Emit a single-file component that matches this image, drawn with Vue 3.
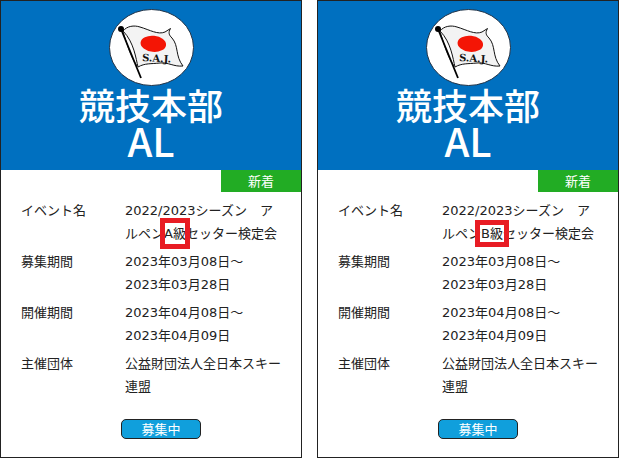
<template>
  <main class="event-list">
    <article v-for="event in events" :key="event.grade" class="event-card">
      <header class="event-banner">
        <svg class="event-logo" viewBox="0 0 85 77" role="img" aria-label="S.A.J.">
          <ellipse cx="42.5" cy="38.5" rx="42" ry="38" fill="#fff" stroke="#243447" stroke-width="1" />
          <path
            d="M14 22 C18 17 25 16 31 18 C41 21 49 26 56 23 L61.5 19.5 C59 24 60 26 63 29 C70 37 66 47 74 57 C65 58 59 53 51 54 C42 55 36 54 29 58 C27 50 25 33 14 22 Z"
            fill="#f3f3f3"
            stroke="#111"
            stroke-width="1"
          />
          <path d="M14 23 C18 34 20 45 28 57" fill="none" stroke="#333" stroke-width="1" />
          <path d="M12 20 L32 69" stroke="#000" stroke-width="1.8" />
          <circle cx="12" cy="20" r="3" fill="#000" />
          <ellipse cx="44.3" cy="34.8" rx="12.8" ry="8" fill="#f41505" transform="rotate(6 44.3 34.8)" />
          <text class="logo-text" x="33" y="52" transform="rotate(3 33 52)">S.A.J.</text>
        </svg>
        <h2 class="event-heading">
          <span class="heading-name">競技本部</span>
          <span class="heading-code">AL</span>
        </h2>
      </header>

      <span class="event-tag">新着</span>

      <dl class="event-info">
        <div class="info-row">
          <dt>イベント名</dt>
          <dd>
            2022/2023シーズン　アルペン<span :class="['grade', event.markClass]">{{ event.grade }}</span>セッター検定会
          </dd>
        </div>
        <div v-for="period in periods" :key="period.label" class="info-row">
          <dt>{{ period.label }}</dt>
          <dd>{{ period.from }}～<br>{{ period.to }}</dd>
        </div>
        <div class="info-row">
          <dt>主催団体</dt>
          <dd>公益財団法人全日本スキー連盟</dd>
        </div>
      </dl>

      <button type="button" class="status-button">募集中</button>
    </article>
  </main>
</template>

<script setup>
const events = [
  { grade: 'A級', markClass: 'grade-tall' },
  { grade: 'B級', markClass: 'grade-wide' }
]

const periods = [
  { label: '募集期間', from: '2023年03月08日', to: '2023年03月28日' },
  { label: '開催期間', from: '2023年04月08日', to: '2023年04月09日' }
]
</script>

<style>
body {
  margin: 0;
  background: #fff;
}
</style>

<style scoped>
.event-list {
  display: grid;
  grid-template-columns: 1fr 1fr;
  gap: 15px;
  font-family: "DejaVu Sans", "Noto Sans CJK JP", sans-serif;
  font-size: 13px;
  line-height: 23px;
  color: #222;
}

.event-card {
  display: flex;
  flex-direction: column;
  border: 1px solid #222;
  background: #fff;
}

.event-banner {
  display: flex;
  flex-direction: column;
  align-items: center;
  padding: 8px 0 12px;
  background: #0070c0;
}

.event-logo {
  width: 85px;
  height: 77px;
}

.logo-text {
  font-family: "DejaVu Serif", serif;
  font-size: 10px;
  font-weight: bold;
  fill: #111;
}

.event-heading {
  display: flex;
  flex-direction: column;
  align-items: center;
  margin: 0;
  font-family: "Noto Sans CJK JP", sans-serif;
  font-weight: 500;
  color: #fff;
}

.heading-name {
  font-size: 36px;
  line-height: 36px;
}

.heading-code {
  font-size: 40px;
  line-height: 36px;
}

.event-tag {
  align-self: flex-end;
  box-sizing: border-box;
  width: 80px;
  padding-top: 2px;
  line-height: 20px;
  text-align: center;
  color: #fff;
  background: #22ac24;
}

.event-info {
  display: flex;
  flex-direction: column;
  gap: 5px;
  margin: 7px 0 0;
  padding: 0 18px 0 20px;
}

.info-row {
  display: grid;
  grid-template-columns: 104px 1fr;
}

.info-row dd {
  margin: 0;
}

.grade {
  position: relative;
}

/* red frame laid over the grade */
.grade::after {
  content: "";
  position: absolute;
  border: 5px solid #e81c24;
}

.grade-tall::after {
  inset: -8px -4px;
}

.grade-wide::after {
  inset: -6px;
}

.status-button {
  align-self: center;
  width: 80px;
  height: 20px;
  margin: 21px 0 18px 20px;
  padding: 2px 0 0;
  border: 1px solid #222;
  border-radius: 5px;
  background: #109fdc;
  color: #fff;
  font-family: inherit;
  font-size: 13px;
  line-height: 16px;
}
</style>
